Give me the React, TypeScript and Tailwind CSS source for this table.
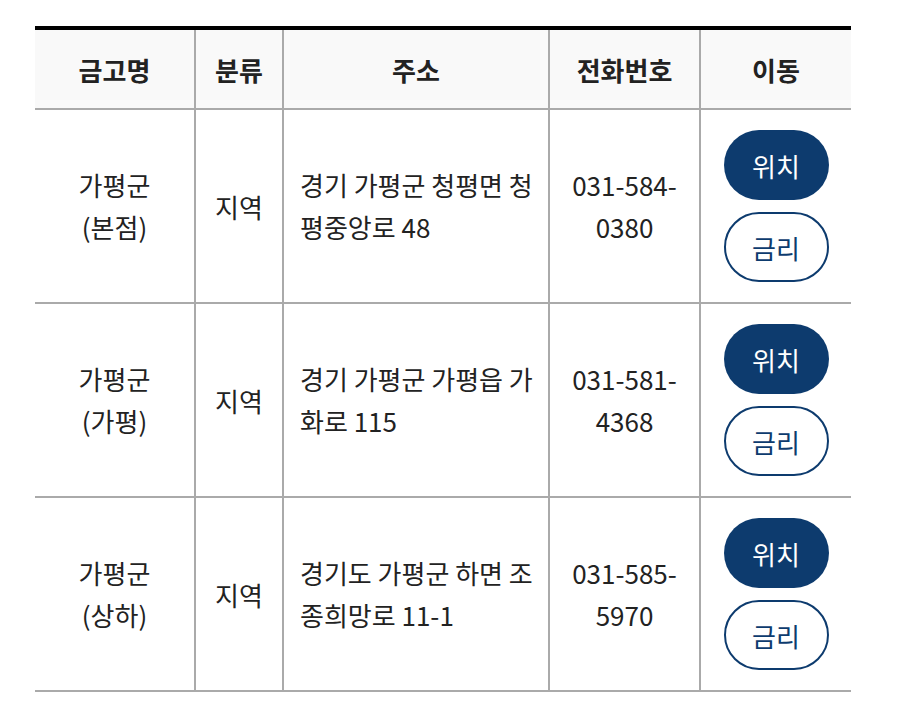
import React from 'react';

type Branch = {
  name: string;
  sub: string;
  kind: string;
  address: string;
  phone: string;
};

const branches: Branch[] = [
  { name: '가평군', sub: '(본점)', kind: '지역', address: '경기 가평군 청평면 청평중앙로 48', phone: '031-584-0380' },
  { name: '가평군', sub: '(가평)', kind: '지역', address: '경기 가평군 가평읍 가화로 115', phone: '031-581-4368' },
  { name: '가평군', sub: '(상하)', kind: '지역', address: '경기도 가평군 하면 조종희망로 11-1', phone: '031-585-5970' },
];

const font = { fontFamily: '"Noto Sans CJK KR", "Noto Sans", sans-serif' };

const App: React.FC = () => {
  return (
    <div className="w-[900px] h-[723px] bg-white pt-[26px] pl-[35px]" style={font}>
      <table className="w-[816px] table-fixed border-collapse border-t-4 border-black text-[26px] text-[#222]">
        <colgroup>
          <col className="w-[160px]" />
          <col className="w-[88px]" />
          <col className="w-[266px]" />
          <col className="w-[151px]" />
          <col className="w-[151px]" />
        </colgroup>
        <thead>
          <tr className="bg-[#f9f9f9] h-[81px] border-b-2 border-[#aaa]">
            <th className="font-bold border-r-2 border-[#aaa]">금고명</th>
            <th className="font-bold border-r-2 border-[#aaa]">분류</th>
            <th className="font-bold border-r-2 border-[#aaa]">주소</th>
            <th className="font-bold border-r-2 border-[#aaa]">전화번호</th>
            <th className="font-bold">이동</th>
          </tr>
        </thead>
        <tbody>
          {branches.map((b, i) => (
            <tr key={i} className="border-b-2 border-[#aaa]">
              <td className="border-r-2 border-[#aaa] text-center leading-[42px]">
                {b.name}
                <br />
                {b.sub}
              </td>
              <td className="border-r-2 border-[#aaa] text-center">{b.kind}</td>
              <td className="border-r-2 border-[#aaa] pl-4 pr-2 leading-[42px]">{b.address}</td>
              <td className="border-r-2 border-[#aaa] px-4 text-center leading-[42px]">{b.phone}</td>
              <td className="py-5">
                <div className="flex flex-col items-center gap-3">
                  <button className="w-[105px] h-[70px] rounded-full bg-[#0d3b6e] text-white text-[26px]">위치</button>
                  <button className="w-[105px] h-[70px] rounded-full border-2 border-[#0d3b6e] text-[#0d3b6e] text-[26px] bg-white">금리</button>
                </div>
              </td>
            </tr>
          ))}
        </tbody>
      </table>
    </div>
  );
};

export default App;
